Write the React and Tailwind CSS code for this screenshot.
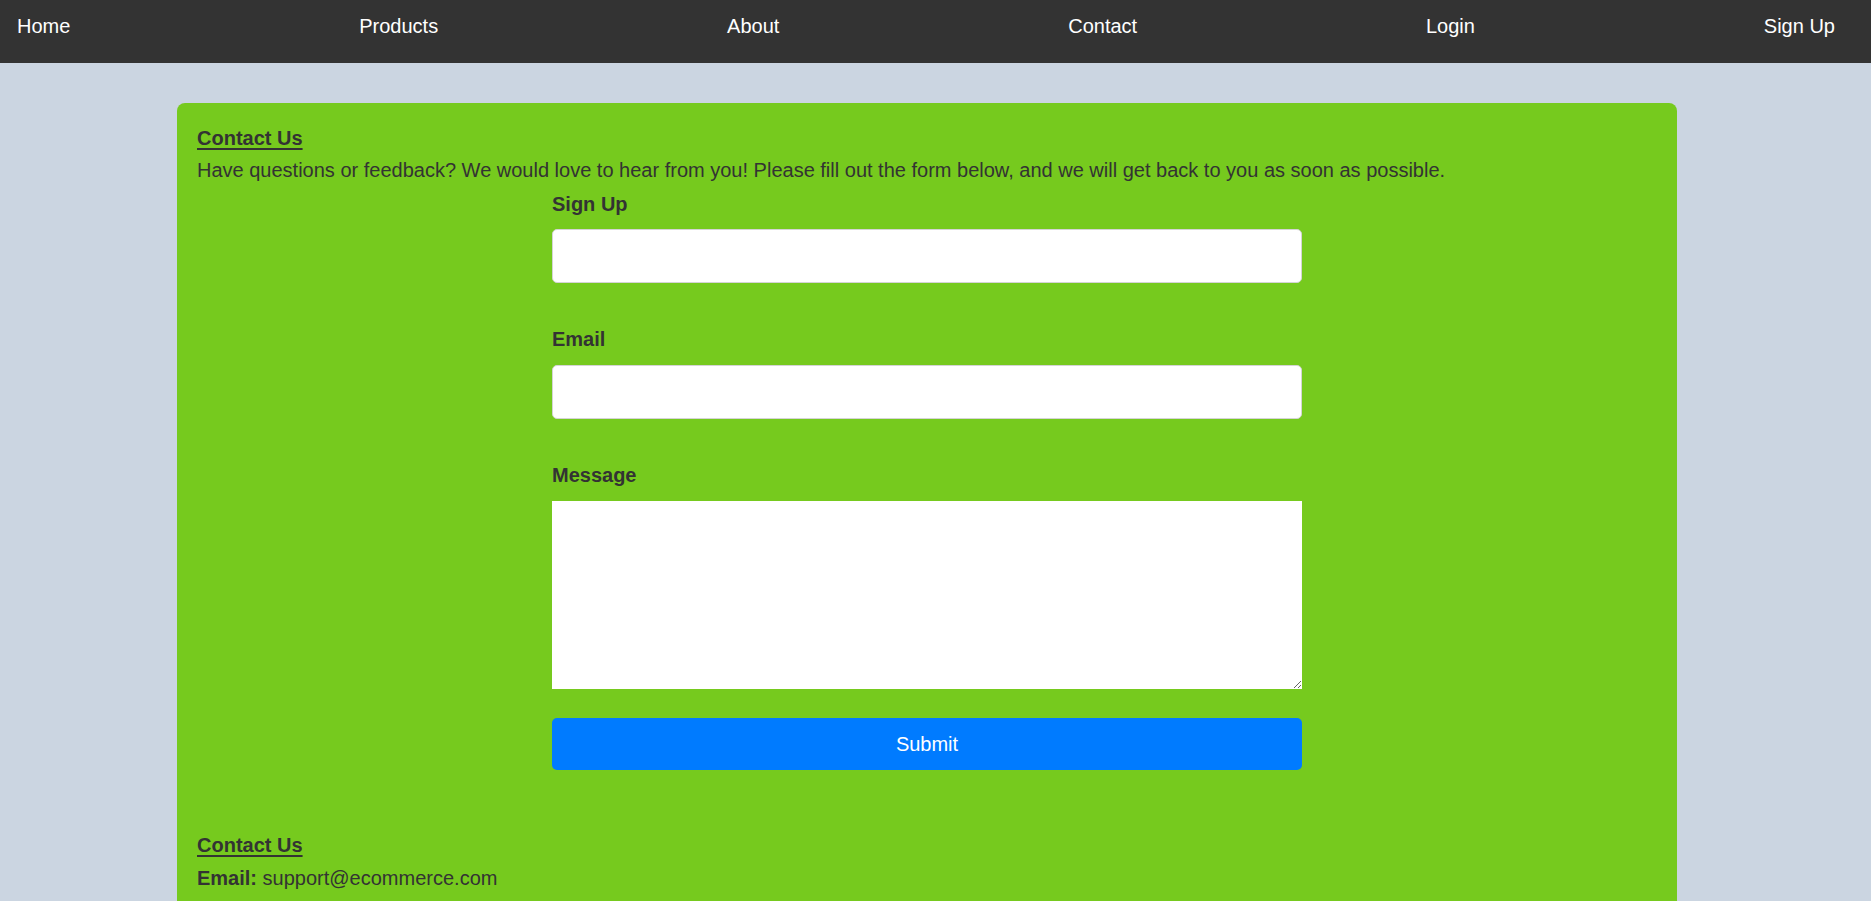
export default function App() {
  const links = ['Home', 'Products', 'About', 'Contact', 'Login', 'Sign Up'];

  return (
    <div className="min-h-screen bg-[#cbd5e1] font-['Liberation_Sans',Arial,sans-serif] text-[#333]">
      <nav className="h-[63px] bg-[#333333] pl-[17px] pr-[36px] pt-[15px]">
        <ul className="flex justify-between">
          {links.map((l) => (
            <li key={l}>
              <a href="#" className="text-[20px] leading-[23px] text-white">
                {l}
              </a>
            </li>
          ))}
        </ul>
      </nav>

      <div className="w-[1854px]">
        <main className="mx-auto mt-[40px] w-[1500px] rounded-[8px] bg-[#76ca1e] px-[20px] pt-[24px] pb-[40px]">
          <h2 className="text-[20px] font-bold leading-[23px] underline underline-offset-[3px]">Contact Us</h2>
          <p className="mt-[9px] text-[20px] leading-[23px]">
            Have questions or feedback? We would love to hear from you! Please fill out the form below, and we will get back to you as soon as possible.
          </p>

          <form className="mx-auto mt-[11px] w-[750px]" onSubmit={(e) => e.preventDefault()}>
            <label className="block text-[20px] font-bold leading-[23px]">Sign Up</label>
            <input
              type="text"
              className="mt-[13px] block h-[54px] w-full rounded-[5px] border border-[#d4d4d4] bg-white px-3 text-[18px] outline-none"
            />

            <label className="mt-[45px] block text-[20px] font-bold leading-[23px]">Email</label>
            <input
              type="email"
              className="mt-[14px] block h-[54px] w-full rounded-[5px] border border-[#d4d4d4] bg-white px-3 text-[18px] outline-none"
            />

            <label className="mt-[45px] block text-[20px] font-bold leading-[23px]">Message</label>
            <textarea className="mt-[14px] block h-[188px] w-full bg-white p-2 text-[18px] outline-none" />

            <button
              type="submit"
              className="mt-[29px] block h-[52px] w-full rounded-[5px] bg-[#007bff] text-[20px] text-white"
            >
              Submit
            </button>
          </form>

          <section className="mt-[64px]">
            <h2 className="text-[20px] font-bold leading-[23px] underline underline-offset-[3px]">Contact Us</h2>
            <p className="mt-[10px] text-[20px] leading-[23px]">
              <strong>Email:</strong> support@ecommerce.com
            </p>
          </section>
        </main>
      </div>
    </div>
  );
}
